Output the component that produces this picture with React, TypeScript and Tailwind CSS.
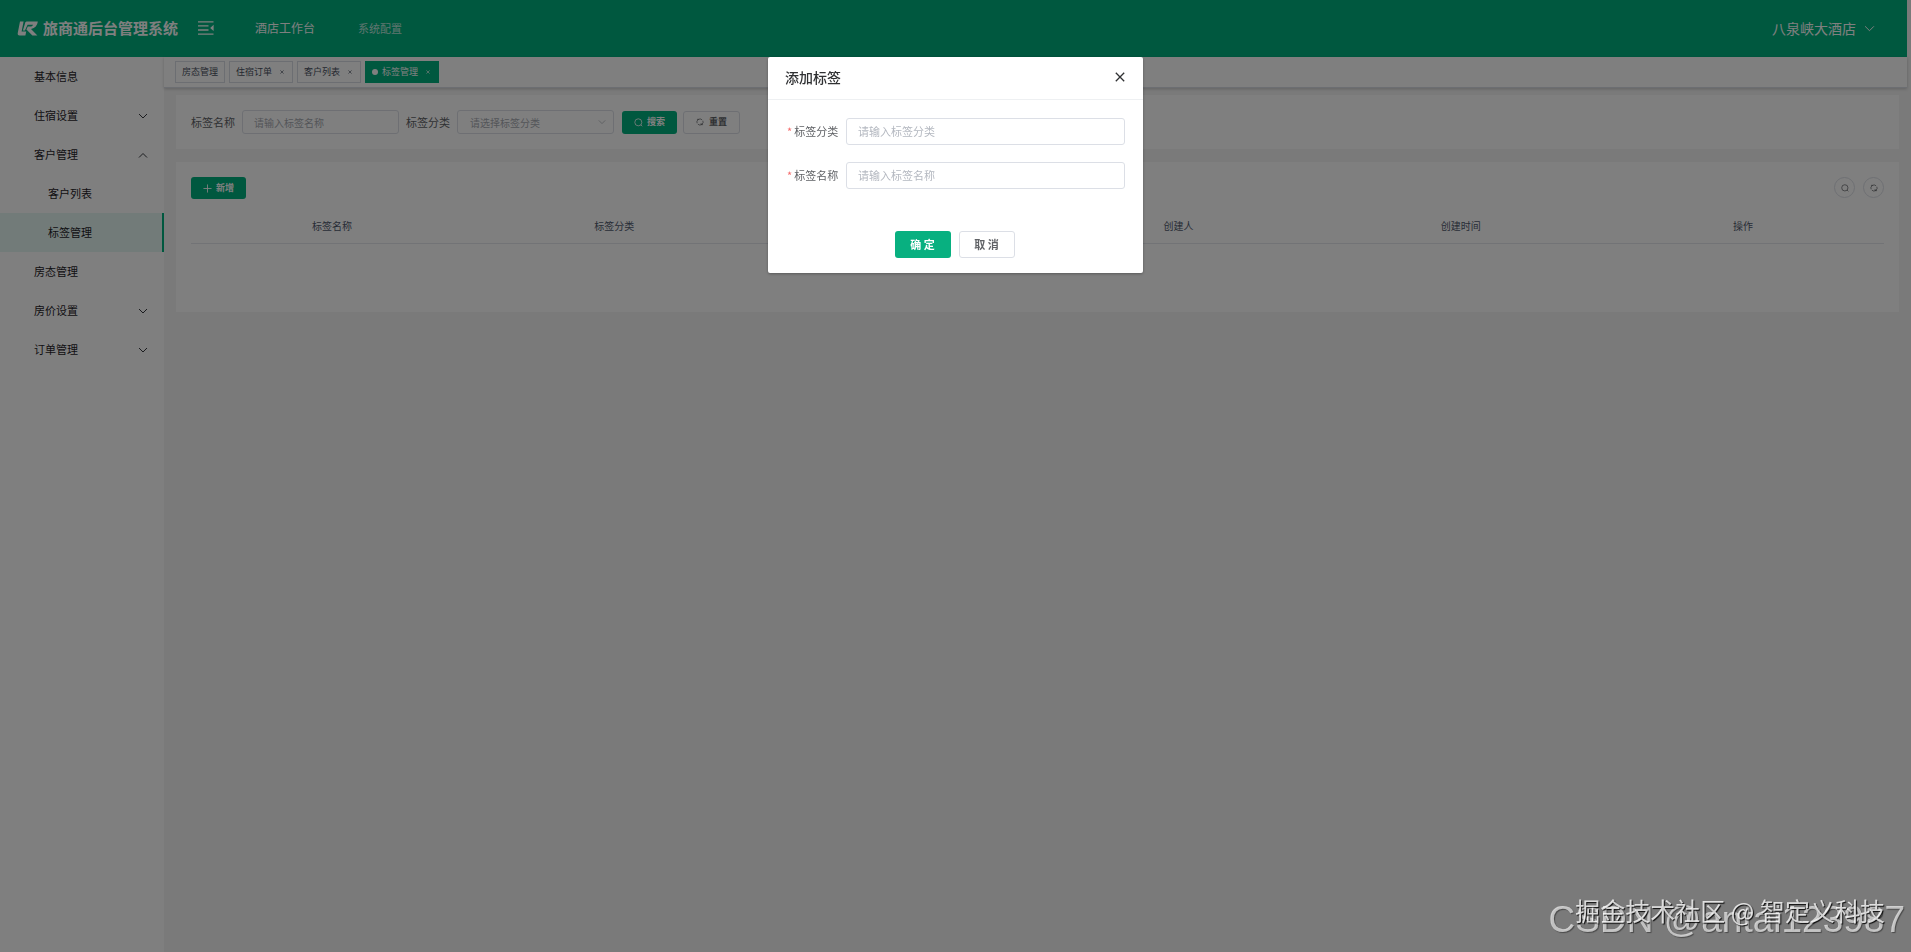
import React, { useState } from 'react';

type MenuItem = {
  label: string;
  arrow?: 'up' | 'down';
  child?: boolean;
  active?: boolean;
};

const menu: MenuItem[] = [
  { label: '基本信息' },
  { label: '住宿设置', arrow: 'down' },
  { label: '客户管理', arrow: 'up' },
  { label: '客户列表', child: true },
  { label: '标签管理', child: true, active: true },
  { label: '房态管理' },
  { label: '房价设置', arrow: 'down' },
  { label: '订单管理', arrow: 'down' }
];

const tabs = [
  { label: '房态管理' },
  { label: '住宿订单', closable: true },
  { label: '客户列表', closable: true },
  { label: '标签管理', closable: true, active: true }
];

const columns = ['标签名称', '标签分类', '', '创建人', '创建时间', '操作'];

const Chevron = ({ up, className }: { up?: boolean; className: string }) => (
  <svg viewBox="0 0 10 10" className={className} fill="none" stroke="currentColor" strokeWidth="0.9">
    <path d={up ? 'M1 7.5 5 3.5 9 7.5' : 'M1 3 5 7 9 3'} />
  </svg>
);

const SearchIcon = ({ className }: { className: string }) => (
  <svg viewBox="0 0 10 10" className={className} fill="none" stroke="currentColor" strokeWidth="0.9">
    <circle cx="4.8" cy="4.8" r="3.9" />
    <path d="M7.6 7.6 9.2 9.2" />
  </svg>
);

const RefreshIcon = ({ className }: { className: string }) => (
  <svg viewBox="0 0 10 10" className={className} fill="none" stroke="currentColor" strokeWidth="0.9">
    <path d="M1.4 6.6A3.9 3.9 0 0 1 7.6 2.2M8.6 3.4A3.9 3.9 0 0 1 2.4 7.8" />
    <path d="M1.2 1.7H3.6M8.8 8.3H6.4V6.4" />
  </svg>
);

const Logo = () => (
  <svg viewBox="0 0 21 15" className="h-[15px] w-[21px]" fill="currentColor">
    <path d="M3 .6H6.6L4.6 10.6H9.2L8.4 14.4H2.6C1 14.4.4 13.4.8 11.8Z" />
    <path d="M9.6.6H20.8C20.2 4.4 18.2 7.4 14 8L20.4 14.4H15.4L9.4 8.6 10.8 5.6H13.2C14.8 5.6 15.6 4.8 16.1 3.8H10.6L7.9 9.6H5.9L8 2.4C8.3 1.3 8.8.8 9.6.6Z" />
  </svg>
);

const Header = () => (
  <header className="flex h-[57px] shrink-0 items-center bg-[#00b07f] pb-[11px] pl-[17px] pr-8 pt-[10px] text-white">
    <Logo />
    <h1 className="ml-[5px] text-[15px] font-bold leading-5">旅商通后台管理系统</h1>
    <button type="button" aria-label="收起菜单" className="ml-5">
      <svg viewBox="0 0 16 14" className="h-[14px] w-4" fill="none" stroke="currentColor" strokeWidth="1.3">
        <path d="M0 .8h15.5M0 4.9h10.5M0 9h10.5M0 13.1h15.5" />
        <path d="M15.6 3.8v6.2L12.2 6.9Z" fill="currentColor" stroke="none" />
      </svg>
    </button>
    <nav className="ml-[41px] flex items-center gap-[43px]">
      <a href="#workbench" className="text-xs">酒店工作台</a>
      <a href="#config" className="text-[11px] text-white/75">系统配置</a>
    </nav>
    <button type="button" className="ml-auto flex items-center gap-2 text-[14px]">
      八泉峡大酒店
      <Chevron className="size-[11px]" />
    </button>
  </header>
);

const Sidebar = () => (
  <aside className="w-[164px] shrink-0 bg-white">
    <ul>
      {menu.map(item => (
        <li key={item.label}>
          <a
            href="#menu"
            className={`flex h-[39px] items-center justify-between pr-4 text-[11px] text-[#1f2329] ${
              item.child ? 'pl-12' : 'pl-[34px]'
            } ${item.active ? 'border-r-2 border-[#00b07f] bg-[#e5f7f2]' : ''}`}
          >
            {item.label}
            {item.arrow && <Chevron up={item.arrow === 'up'} className="size-[10px]" />}
          </a>
        </li>
      ))}
    </ul>
  </aside>
);

const TagsView = () => (
  <div className="flex h-[31px] items-start gap-1 border-b border-[#d8dce5] bg-white pl-[11px] pt-1 shadow-[0_1px_3px_rgba(0,0,0,0.2)]">
    {tabs.map(tab => (
      <div
        key={tab.label}
        className={`flex h-[22px] items-center border px-[6px] text-[9px] ${
          tab.active ? 'border-[#00b07f] bg-[#00b07f] text-white' : 'border-[#d8dce5] text-[#495060]'
        }`}
      >
        {tab.active && <span className="mr-1 size-[6px] rounded-full bg-white" />}
        <a href="#tab">{tab.label}</a>
        {tab.closable && (
          <button type="button" aria-label={`关闭${tab.label}`} className="ml-[5px] flex w-[9px] justify-center">
            <svg viewBox="0 0 5 5" className="size-1" stroke="currentColor" strokeWidth="0.8">
              <path d="M.5.5 4.5 4.5M4.5.5.5 4.5" />
            </svg>
          </button>
        )}
      </div>
    ))}
  </div>
);

const SearchForm = () => (
  <form className="flex h-[54px] items-center bg-white px-[15px] text-[11px] text-[#606266]" onSubmit={e => e.preventDefault()}>
    <label htmlFor="query-name" className="mr-[7px]">标签名称</label>
    <input
      id="query-name"
      placeholder="请输入标签名称"
      className="h-6 w-[157px] rounded-[3px] border border-[#dcdfe6] px-[11px] text-[10px] outline-none placeholder:text-[#a8abb2]"
    />
    <label htmlFor="query-type" className="ml-[7px] mr-[7px]">标签分类</label>
    <div className="relative">
      <select
        id="query-type"
        className="h-6 w-[157px] appearance-none rounded-[3px] border border-[#dcdfe6] bg-white px-3 text-[10px] text-[#a8abb2] outline-none"
      >
        <option>请选择标签分类</option>
      </select>
      <Chevron className="pointer-events-none absolute right-2 top-2 size-2 text-[#a8abb2]" />
    </div>
    <button
      type="submit"
      className="ml-2 flex h-[23px] w-[55px] items-center justify-center gap-1 rounded-[3px] bg-[#00b07f] text-[9px] font-bold text-white"
    >
      <SearchIcon className="size-[9px]" />
      搜索
    </button>
    <button
      type="reset"
      className="ml-[6px] flex h-[23px] w-[57px] items-center justify-center gap-[5px] rounded-[3px] border border-[#dcdfe6] text-[9px] font-bold"
    >
      <RefreshIcon className="size-2" />
      重置
    </button>
  </form>
);

const TagTable = ({ onAdd }: { onAdd: () => void }) => (
  <section className="mt-[13px] h-[150px] bg-white px-[15px] pt-[15px]">
    <div className="flex h-[22px] items-start justify-between">
      <button
        type="button"
        onClick={onAdd}
        className="flex h-[22px] w-[55px] items-center justify-center gap-1 rounded-[3px] bg-[#00b07f] text-[9px] font-bold text-white"
      >
        <svg viewBox="0 0 10 10" className="size-[9px]" stroke="currentColor" strokeWidth="1">
          <path d="M5 .5v9M.5 5h9" />
        </svg>
        新增
      </button>
      <div className="flex gap-2 text-[#606266]">
        <button type="button" aria-label="搜索" className="flex size-[21px] items-center justify-center rounded-full border border-[#dcdfe6]">
          <SearchIcon className="size-2" />
        </button>
        <button type="button" aria-label="刷新" className="flex size-[21px] items-center justify-center rounded-full border border-[#dcdfe6]">
          <RefreshIcon className="size-2" />
        </button>
      </div>
    </div>
    <table className="mt-3 w-full table-fixed">
      <thead>
        <tr className="h-[32px] border-b border-[#e4e7ed]">
          {columns.map((col, i) => (
            <th key={i} className="pb-[2px] text-center text-[10px] font-normal text-[#515a6e]">{col}</th>
          ))}
        </tr>
      </thead>
    </table>
  </section>
);

const FormRow = ({ id, label }: { id: string; label: string }) => (
  <div className="flex items-center">
    <label htmlFor={id} className="flex w-[60px] shrink-0 pl-px text-[11px] text-[#606266]">
      <span className="mr-[2px] text-[#f56c6c]">*</span>
      {label}
    </label>
    <input
      id={id}
      placeholder={`请输入${label}`}
      className="h-[27px] min-w-0 flex-1 rounded-[3px] border border-[#dcdfe6] px-[11px] pb-[2px] text-[11px] outline-none placeholder:text-[#b4b8c0]"
    />
  </div>
);

const AddTagDialog = ({ onClose }: { onClose: () => void }) => (
  <div className="fixed inset-0 z-10 flex items-start justify-center bg-black/50 pt-[57px]">
    <div role="dialog" aria-labelledby="dialog-title" className="w-[375px] rounded-[2px] bg-white shadow-[0_1px_3px_rgba(0,0,0,0.3)]">
      <div className="flex h-[43px] items-center justify-between border-b border-[#eef0f2] pb-[2px] pl-[17px] pr-[18px]">
        <h2 id="dialog-title" className="text-[14px] font-medium text-[#303133]">添加标签</h2>
        <button type="button" aria-label="关闭" onClick={onClose} className="text-[#303133]">
          <svg viewBox="0 0 10 10" className="size-[10px]" stroke="currentColor" strokeWidth="1.3">
            <path d="M.8.8 9.2 9.2M9.2.8.8 9.2" />
          </svg>
        </button>
      </div>
      <div className="flex flex-col gap-[17px] px-[18px] pt-[18px]">
        <FormRow id="tag-type" label="标签分类" />
        <FormRow id="tag-name" label="标签名称" />
      </div>
      <div className="flex justify-center gap-2 pb-[15px] pr-[2px] pt-[42px]">
        <button type="button" className="h-[27px] w-14 rounded-[3px] bg-[#08b080] text-[11px] font-bold text-white">
          确 定
        </button>
        <button
          type="button"
          onClick={onClose}
          className="h-[27px] w-14 rounded-[3px] border border-[#dcdfe6] text-[11px] font-bold text-[#606266]"
        >
          取 消
        </button>
      </div>
    </div>
  </div>
);

export default function App() {
  const [open, setOpen] = useState(true);

  return (
    <div className="flex min-h-screen flex-col bg-[#f4f4f4] pr-1 font-['Noto_Sans_CJK_SC',sans-serif]">
      <Header />
      <div className="flex flex-1">
        <Sidebar />
        <main className="min-w-0 flex-1">
          <TagsView />
          <div className="pl-3 pr-2 pt-[7px]">
            <SearchForm />
            <TagTable onAdd={() => setOpen(true)} />
          </div>
        </main>
      </div>
      {open && <AddTagDialog onClose={() => setOpen(false)} />}

      {/* Watermarks */}
      <div className="pointer-events-none fixed bottom-0 right-[6px] z-20 whitespace-nowrap font-['Liberation_Sans',sans-serif] text-[37px] leading-[64px] text-white/65 [text-shadow:1px_1px_1px_rgba(0,0,0,0.4)]">
        CSDN @antai123987
      </div>
      <div className="pointer-events-none fixed bottom-[26px] right-[26px] z-20 whitespace-nowrap text-[25px] leading-8 text-white/80 [text-shadow:1px_1px_1px_rgba(0,0,0,0.9)]">
        掘金技术社区 @ 智定义科技
      </div>
    </div>
  );
}
